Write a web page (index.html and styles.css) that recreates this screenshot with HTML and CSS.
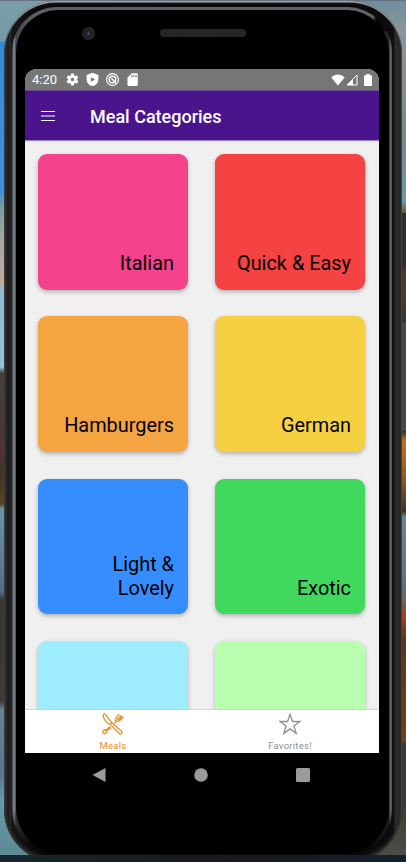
FILE: index.html
```html
<!DOCTYPE html>
<html lang="en">
<head>
<meta charset="utf-8">
<title>Meal Categories</title>
<link rel="stylesheet" href="styles.css">
</head>
<body>
<div class="desktop">
  <div class="wall wall-left"></div>
  <div class="wall wall-right"></div>
  <div class="key key-power"></div>
  <div class="key key-volume"></div>
  <div class="shell">
    <div class="rim">
      <div class="glass">
        <div class="sensors"><span class="camera"></span><span class="speaker"></span></div>
        <div class="screen">
          <div class="status">
            <span class="time">4:20</span>
            <svg class="st gear" viewBox="1 1 22 22"><path fill-rule="evenodd" d="M19.400 13a7.500 7.500 0 0 0 0-2l2.100-1.600c.2-.2.3-.5.100-.7l-2-3.400c-.1-.2-.4-.3-.6-.2l-2.500 1a7 7 0 0 0-1.700-1l-.4-2.600c0-.3-.2-.5-.5-.5h-4c-.3 0-.5.200-.5.500L9 5.100a7 7 0 0 0-1.700 1l-2.500-1c-.2-.1-.5 0-.6.200l-2 3.400c-.1.200-.1.500.1.700L4.500 11a7.500 7.500 0 0 0 0 2l-2.200 1.600c-.2.200-.2.500-.1.700l2 3.400c.1.200.4.300.6.200l2.500-1a7 7 0 0 0 1.700 1l.4 2.600c0 .3.200.5.500.5h4c.3 0 .5-.2.500-.5l.4-2.600a7 7 0 0 0 1.700-1l2.500 1c.2.100.5 0 .6-.2l2-3.400c.1-.2.1-.5-.1-.7zM12 15a3 3 0 1 1 0-6 3 3 0 0 1 0 6z"/></svg>
            <svg class="st" viewBox="1 1 22 22"><path fill-rule="evenodd" d="M12 .5 2 4.500v7.500c0 5.500 4.200 9.800 10 11.500 5.800-1.700 10-6 10-11.500V4.500zM9.500 8l7 4-7 4z"/></svg>
            <svg class="st" viewBox="1 1 22 22" fill="none" stroke="#fff"><circle cx="12" cy="12" r="10" stroke-width="2"/><circle cx="12" cy="12" r="5.500" stroke-width="2.400"/><path d="m10 10 8 8" stroke-width="2.600"/></svg>
            <svg class="st" viewBox="1 1 22 22"><path fill-rule="evenodd" d="M19 1.500h-8L3.500 8.500V21c0 1.100.9 2 2 2H19c1.100 0 2-.9 2-2V3.500c0-1.100-.9-2-2-2zM10 4.500h1.800v3.500H10zm3.600 0h1.800v3.500h-1.800zm3.600 0H19v3.500h-1.800z"/></svg>
            <span class="spacer"></span>
            <svg class="wifi" viewBox="0 0 14 12"><path d="M.3 3.500C4-.5 10-.5 13.700 3.500L7 11.500z"/></svg>
            <svg class="signal" viewBox="0 0 12 12"><path class="outline" d="M11 1v10H1z" stroke="#fff" stroke-width="1"/><path d="M1 11 7 5V11z"/></svg>
            <svg class="battery" viewBox="0 0 8 12"><path d="M2.300 0h3.400v1.200H7q1 0 1 1V11q0 1-1 1H1q-1 0-1-1V2.200q0-1 1-1h1.300z"/></svg>
          </div>
          <header class="appbar">
            <svg class="menu" viewBox="0 0 14 10"><path d="M0 .5h14M0 5h14M0 9.500h14" stroke="#fff"/></svg>
            <h1>Meal Categories</h1>
          </header>
          <main class="grid">
            <div class="card pink"><span>Italian</span></div>
            <div class="card red"><span>Quick &amp; Easy</span></div>
            <div class="card orange"><span>Hamburgers</span></div>
            <div class="card yellow"><span>German</span></div>
            <div class="card blue"><span>Light &amp;<br>Lovely</span></div>
            <div class="card green"><span>Exotic</span></div>
            <div class="card cyan"></div>
            <div class="card mint"></div>
          </main>
          <nav class="tabs">
            <div class="tab active">
              <svg viewBox="0 0 22 22" fill="none" stroke="currentColor" stroke-width="1.300" stroke-linecap="round" stroke-linejoin="round"><path d="M1.500 1.200C.5 3 2 7 5 9.500l2.800 2 2-1.800L3.500 1.600C2.900.8 2 .6 1.500 1.200zM9.800 9.700l9.700 8.600c1.600 1.500-.6 3.900-2.200 2.300L9.200 12.200"/><path d="M7.700 14 4 17.300c-1.700-1.600-4.300 1.200-2.700 2.700s4.200-.5 3.200-2l4.200-3.200M12.700 10l2.200-2c2 1 3.700-.3 6.100-3.800M13.600 8.500c-1.100-2.500.4-4.300 3.400-7M19 2.800l-3.500 3.500M20 3.700l-3 3"/></svg>
              <span>Meals</span>
            </div>
            <div class="tab">
              <svg viewBox="0 0 22 22" fill="none" stroke="currentColor" stroke-width="1.300"><path d="m11 1.300 2.400 7.200H21l-6.100 4.500 2.300 7.400-6.200-4.500-6.200 4.500L7.100 13 1 8.500h7.600z"/></svg>
              <span>Favorites!</span>
            </div>
          </nav>
        </div>
        <div class="softkeys">
          <svg viewBox="0 0 14 16"><path d="M13.500 1v14L.5 8z"/></svg>
          <svg viewBox="0 0 14 14"><circle cx="7" cy="7" r="6.800"/></svg>
          <svg viewBox="0 0 14 14"><rect width="14" height="14" rx="1.500"/></svg>
        </div>
      </div>
    </div>
  </div>
</div>
<div class="taskbar"></div>
</body>
</html>
```
FILE: styles.css
```css
* { box-sizing: border-box; }
body { margin: 0; width: 406px; height: 862px; overflow: hidden; font-family: Roboto, "Liberation Sans", sans-serif; background: #14202a; }
.desktop { position: relative; height: 855px; padding: 1px 4px 0; overflow: hidden; background: #667282; }
.taskbar { height: 7px; background: linear-gradient(90deg, #17262d, #18191f 55%, #14202c); }
.wall { position: absolute; top: 1px; bottom: 0; width: 60px; }
.wall-left { left: 0; background: linear-gradient(180deg, #7b9fa9 0, #749aa6 40px, #2f8bdb 41px, #3992de 190px, #779aa3 205px, #a6a7a4 240px, #c3aa99 282px, #8dbbd4 290px, #94c1d6 366px, #46413e 372px, #4a3438 430px, #57322f 450px, #3b3329 470px, #5d421c 503px, #6b93ac 508px, #526d8d 590px, #373432 600px, #403b38 700px, #608493 709px, #55768e 770px, #659aa8 800px, #5e8995); }
.wall-right { right: 0; background: linear-gradient(180deg, #6d8d9d 0, #8b9799 30px, #78888e 140px, #6a9bb0 200px, #784a28 213px, #49352a 266px, #513b28 290px, #373230 325px, #303237 430px, #bc7522 440px, #8c5a25 480px, #3e3025 510px, #6b8790 516px, #5d7179 590px, #9b4429 615px, #56381f 640px, #704214 740px, #3d3830 743px, #3c3a2e 800px, #4b4d49); }
.key { position: absolute; right: 0; width: 5px; background: #2d2e31; border-left: 1px solid #47484b; }
.key-power { top: 213px; height: 54px; }
.key-volume { top: 323px; height: 108px; background: #46484d; }
.shell { position: relative; height: 862px; width: 398px; padding: 6px 10px 6px 8px; border-radius: 52px 52px 54px 54px; background: linear-gradient(90deg, #555 0, #292929 1px, #292929 3px, #161616 4px, #2d2d2d 6px, #171717 8px, #0b0b0b 30px, #0b0b0b 385px, #111 390px, #2b2b2b 391px, #292929 396px, #424345 398px); box-shadow: inset 0 2px 1px -0.5px #b0adb0, inset 0 0 1px 1px #39393a, inset 0 -4px 3px #292929; }
.rim { height: 100%; padding: 3px 3px 3px 4px; border-radius: 45px 45px 48px 48px; background: radial-gradient(circle at calc(100% - 8px) 15px, #080808 0, #080808 8px, transparent 12px), linear-gradient(180deg, transparent calc(100% - 48px), #080808 calc(100% - 12px)), linear-gradient(90deg, #3d4145 0, #858b92 2px, #41464c 4px, #5d5f61 20px, #626466 360px, #1d1e20 377px, #65676b 378px, #505256 380px); }
.glass { height: 100%; border-radius: 42px 42px 46px 46px; background: #000; padding: 0 10px 0 9px; }
.sensors { display: flex; align-items: center; height: 59px; padding: 0 0 13px 57px; }
.camera { width: 13px; height: 13px; border-radius: 50%; background: radial-gradient(circle, #596b7a 0, #202832 1.5px, #24282c 3px, #151719 4px, #29292a 5px, #202020 7px); }
.speaker { width: 86px; height: 8px; margin-left: 65px; border-radius: 4px; background: repeating-linear-gradient(60deg, #202020 0, #2b2b2b 2px); }
.screen { width: 354px; height: 684px; border-radius: 12px 12px 0 0; overflow: hidden; background: #f0f0f0; display: flex; flex-direction: column; }
.status { height: 21px; flex: none; display: flex; align-items: center; padding: 0 7px; color: #fff; background: #747776; }
.status svg { fill: #fff; flex: none; }
.time { width: 34px; font-size: 13px; line-height: 21px; }
.st { width: 13px; height: 13px; margin-right: 7px; }
.status .st[fill="none"], .status .outline { fill: none; }
.spacer { flex: 1; }
.wifi { width: 14px; height: 12px; }
.signal { width: 12px; height: 12px; margin-left: 1px; }
.battery { width: 8px; height: 12px; margin-left: 6px; }
.appbar { position: relative; height: 50px; flex: none; display: flex; align-items: center; padding: 2px 0 0 16px; background: #4a148c; box-shadow: 0 1px 1px #4a148c80, inset 0 1px #6b4c8e; }
.menu { width: 14px; height: 10px; margin-top: -1px; }
h1 { margin: 1px 0 0 35px; font-size: 18px; line-height: 24px; font-weight: 500; color: #fff; }
.grid { flex: 1; min-height: 0; overflow: hidden; display: grid; grid-template-columns: 150px 150px; grid-auto-rows: 135.500px; column-gap: 27px; row-gap: 26.900px; padding: 14px 13px 0; }
.card { border-radius: 9px; padding: 14px 14px 13.600px; display: flex; align-items: flex-end; justify-content: flex-end; text-align: right; font-size: 19.900px; line-height: 24px; color: #000; box-shadow: 0 2px 4px #0004; }
.pink { background: #f5428d; }
.red { background: #f54242; }
.orange { background: #f5a442; }
.yellow { background: #f5d142; }
.blue { background: #368dff; }
.green { background: #41d95d; }
.cyan { background: #9eecff; }
.mint { background: #b9ffb0; }
.tabs { height: 44px; flex: none; display: flex; border-top: 1px solid #d2d0d4; background: #fff; }
.tab { flex: 1; display: flex; flex-direction: column; align-items: center; padding: 3px 1px 0 0; color: #8e8e93; font-size: 9.500px; letter-spacing: .25px; line-height: 12px; }
.tab svg { width: 22px; height: 22px; margin-bottom: 5px; }
.tab.active { color: #e78f2e; }
.softkeys { display: grid; grid-template-columns: 14px 14px 14px; column-gap: 88px; align-items: center; height: 44px; padding-left: 67px; }
.softkeys svg { width: 14px; fill: #9b9b9d; }
```
